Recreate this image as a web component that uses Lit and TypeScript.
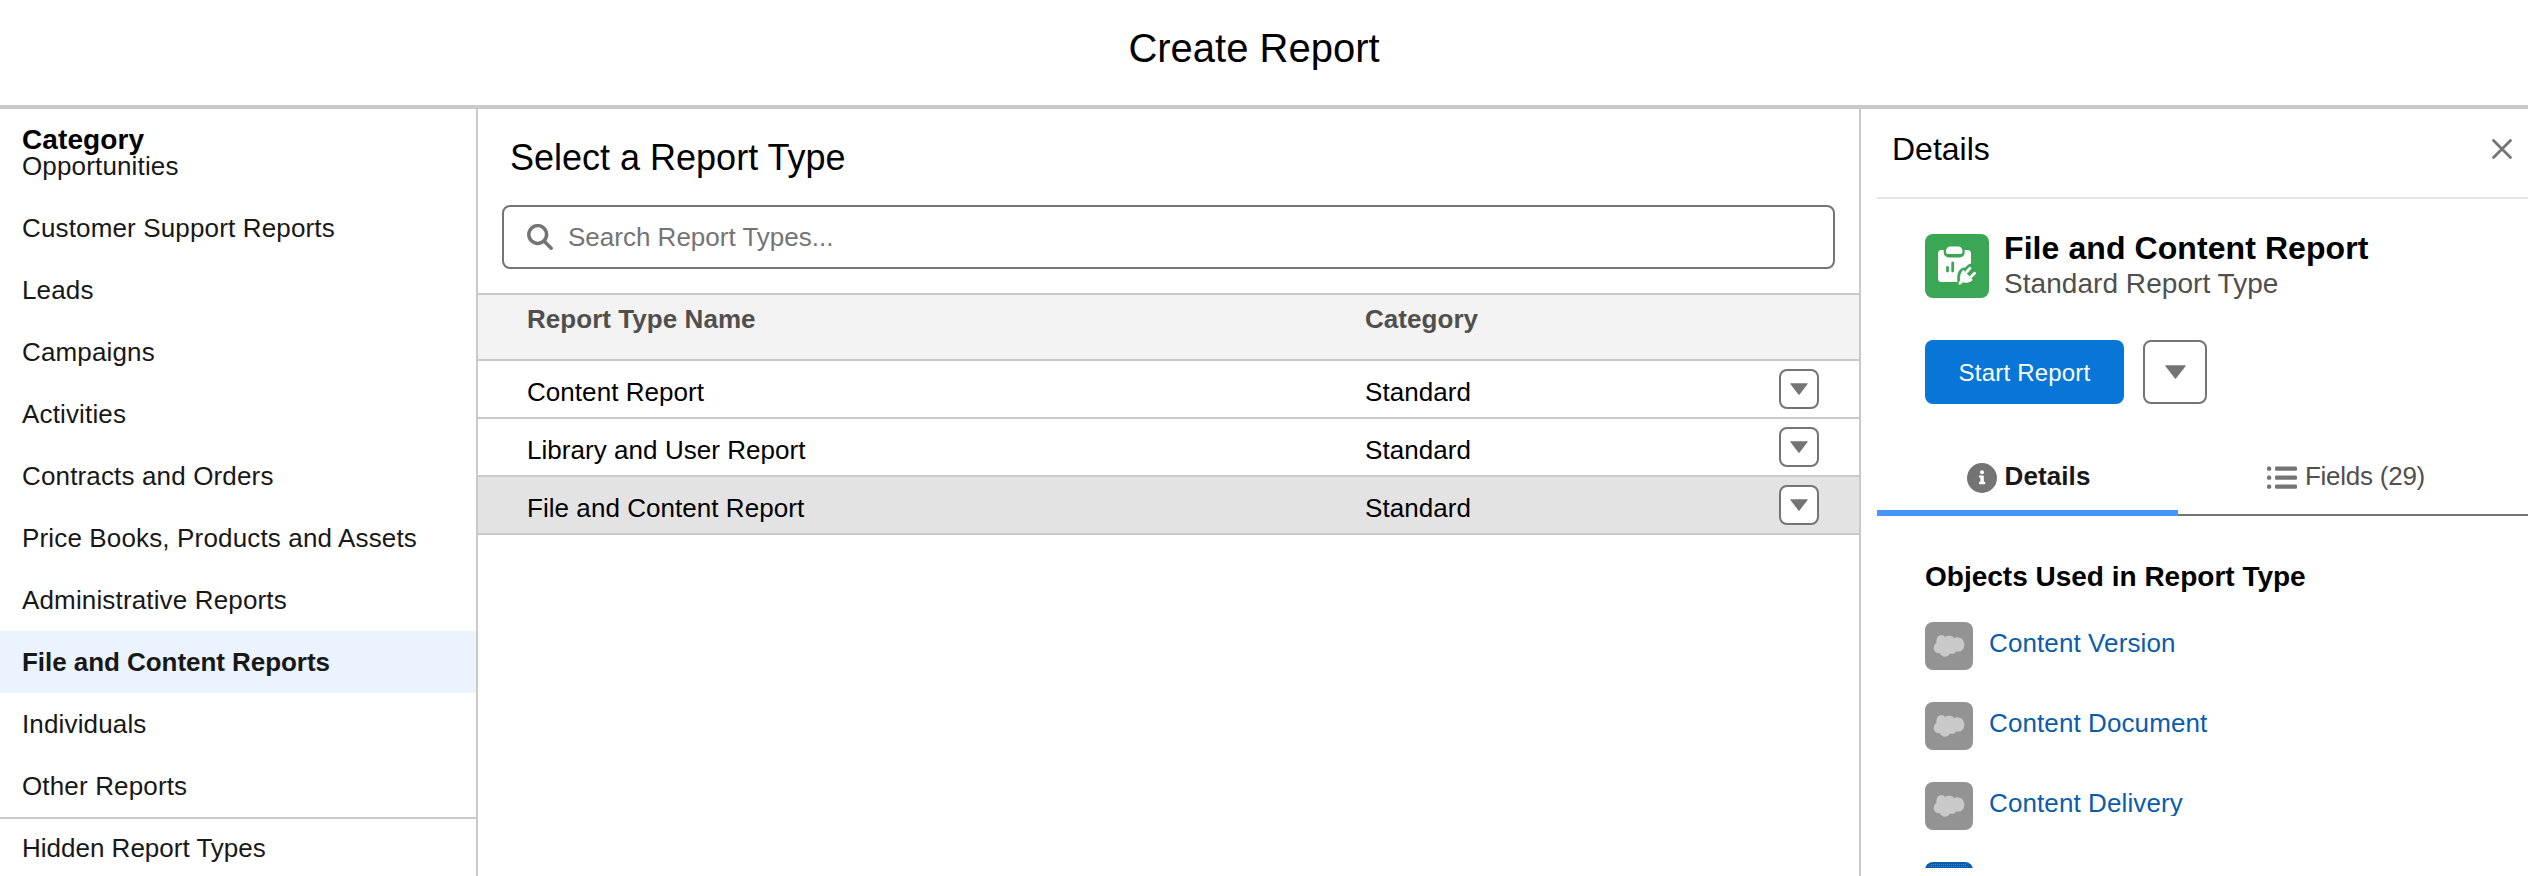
import { LitElement, html, css, svg } from "lit";
import { customElement, property } from "lit/decorators.js";
import { classMap } from "lit/directives/class-map.js";

const categories = [
  "Opportunities",
  "Customer Support Reports",
  "Leads",
  "Campaigns",
  "Activities",
  "Contracts and Orders",
  "Price Books, Products and Assets",
  "Administrative Reports",
  "File and Content Reports",
  "Individuals",
  "Other Reports",
  "Hidden Report Types",
];

const reportTypes = ["Content Report", "Library and User Report", "File and Content Report"];
const objects = ["Content Version", "Content Document", "Content Delivery"];
const selectedCategory = "File and Content Reports";
const selectedReport = "File and Content Report";

@customElement("menu-button")
class MenuButton extends LitElement {
  @property({ type: Boolean, reflect: true }) large = false;

  static styles = css`
    :host { display: block; width: 40px; height: 40px; flex: none; }
    :host([large]) { width: 64px; height: 64px; }
    .btn {
      display: flex; align-items: center; justify-content: center;
      box-sizing: border-box; width: 100%; height: 100%; padding: 0;
      background: #fff; border: 2px solid #747474; border-radius: 8px;
    }
    svg { display: block; width: 18px; height: 12px; }
    :host([large]) svg { width: 21px; height: 14px; }
  `;

  render() {
    return html`<button class="btn" aria-label="Show menu">
      <svg viewBox="0 0 18 12"><path d="M.8 .2h16.400c.5 0 .7.500.4.900L9.600 11.400c-.3.400-.9.400-1.200 0L.4 1.100C.1.700.3.200.8.200z" fill="#747474"/></svg>
    </button>`;
  }
}

@customElement("category-nav")
class CategoryNav extends LitElement {
  static styles = css`
    :host { display: block; box-sizing: border-box; width: 478px; flex: none; border-right: 2px solid #c9c9c9; overflow: hidden; }
    .title { height: 26px; padding-left: 22px; font-size: 28px; font-weight: 700; line-height: 61px; letter-spacing: .1px; color: #000; margin: 0; }
    .item { box-sizing: border-box; height: 62px; padding-left: 22px; line-height: 62px; font-size: 26px; letter-spacing: .15px; color: #181818; white-space: nowrap; }
    .selected { background: #ebf3fe; font-weight: 700; letter-spacing: -.05px; }
    .hidden-types { border-top: 2px solid #c9c9c9; line-height: 58px; letter-spacing: 0; }
  `;

  render() {
    return html`<h2 class="title">Category</h2>
      ${categories.map((c, i) => html`<div class=${classMap({
        item: true,
        selected: c === selectedCategory,
        "hidden-types": i === categories.length - 1,
      })}>${c}</div>`)}`;
  }
}

@customElement("report-list")
class ReportList extends LitElement {
  static styles = css`
    :host { display: block; flex: 1; min-width: 0; }
    .title { margin: 0; padding: 25px 0 0 32px; font-size: 36px; font-weight: 400; line-height: 47px; color: #000; }
    .search {
      display: flex; align-items: center; box-sizing: border-box; height: 64px; margin: 24px 24px 24px;
      padding-left: 23px; gap: 15px; border: 2px solid #747474; border-radius: 8px;
      font-size: 26px; color: #747474;
    }
    .search svg { width: 26px; height: 26px; }
    .row {
      display: grid; grid-template-columns: 886px 415px 40px; box-sizing: border-box; height: 58px;
      border-bottom: 2px solid #c9c9c9; font-size: 26px; line-height: 62px; letter-spacing: .05px; color: #000;
    }
    .row span { padding-left: 1px; }
    .row span:first-child { padding-left: 49px; }
    .row menu-button { margin-top: 8px; }
    .head { height: 68px; border-top: 2px solid #c9c9c9; background: #f3f3f3; color: #514f4d; font-weight: 700; line-height: 48px; }
    .selected { background: #e3e3e3; }
  `;

  render() {
    return html`<h2 class="title">Select a Report Type</h2>
      <div class="search">
        <svg viewBox="0 0 26 26" fill="none" stroke="#747474"><circle cx="10.7" cy="10.5" r="8.900" stroke-width="3.500"/><path d="M17 17l7.200 7.200" stroke-width="3.500" stroke-linecap="round"/></svg>
        <span>Search Report Types...</span>
      </div>
      <div class="row head"><span>Report Type Name</span><span>Category</span></div>
      ${reportTypes.map((r) => html`<div class=${classMap({ row: true, selected: r === selectedReport })}>
        <span>${r}</span><span>Standard</span><menu-button></menu-button>
      </div>`)}`;
  }
}

const cloud = svg`<path d="M20 15.2C21.2 14 22.8 13.6 24.5 13.8C26.5 13.8 28.2 14.8 29 16C30.2 15.4 31.4 15.3 33 15.4C36.8 15.4 39.3 18.8 39.3 22.7C39.3 26.8 36.5 29.8 33 29.6C32.2 29.6 31.6 29.6 31 29.4C30.2 31 28.6 32 26.7 31.8C26 31.8 25.4 31.7 24.8 31.4C23.9 33.5 22 34.7 19.9 34.7C17.7 34.7 15.8 33.3 15 31.3C12 31.8 8.6 29.5 8.6 25.9C8.6 23.8 9.7 22 11.5 20.9C11 17 12.6 13.2 16.2 13.1C17.8 13.1 19.1 13.9 20 15.2Z" fill="#c9c9c9"/>`;

@customElement("report-details")
class ReportDetails extends LitElement {
  static styles = css`
    :host { display: flex; flex-direction: column; box-sizing: border-box; width: 669px; flex: none; padding-left: 16px; border-left: 2px solid #c9c9c9; overflow: hidden; }
    .top { display: flex; justify-content: space-between; box-sizing: border-box; height: 90px; flex: none; padding: 20px 15px 0 15px; border-bottom: 2px solid #e5e5e5; }
    .top h2 { margin: 0; font-size: 32px; font-weight: 400; line-height: 40px; color: #000; }
    .top svg { width: 22px; height: 22px; margin-top: 9px; }
    .summary { display: flex; height: 64px; flex: none; margin: 35px 0 0 48px; gap: 15px; }
    .report-icon { width: 64px; height: 64px; flex: none; }
    .name { margin: -6px 0 0; font-size: 32px; line-height: 40px; letter-spacing: .08px; color: #000; }
    .kind { margin: 0; font-size: 28px; line-height: 31px; letter-spacing: .05px; color: #514f4d; }
    .actions { display: flex; gap: 19px; flex: none; margin: 42px 0 0 48px; }
    .start { width: 199px; height: 64px; padding: 2px 0 0; border: 0; border-radius: 8px; background: #0876d6; color: #fff; font: inherit; font-size: 24px; letter-spacing: .2px; }
    .tabs { display: flex; flex: none; height: 82px; margin-top: 30px; font-size: 26px; line-height: 30px; color: #514f4d; }
    .tab { display: flex; align-items: flex-start; justify-content: center; gap: 8px; box-sizing: border-box; height: 82px; padding-top: 29px; border-bottom: 2px solid #747474; }
    .tab svg { width: 30px; height: 30px; flex: none; }
    .tab span { margin-top: -2px; }
    .active { width: 301px; padding-left: 2px; border-bottom: 6px solid #4596f8; font-weight: 700; color: #181818; letter-spacing: .1px; }
    .fields { width: 336px; letter-spacing: -.25px; }
    .rest { flex: 1; border-bottom: 2px solid #747474; }
    .heading { margin: 43px 0 0 48px; flex: none; font-size: 28px; line-height: 36px; color: #000; }
    .objects { display: flex; flex-direction: column; gap: 32px; height: 246px; flex: none; overflow: hidden; margin: 27px 0 0 48px; }
    .object { display: flex; gap: 16px; flex: none; height: 48px; }
    .object svg { width: 48px; height: 48px; flex: none; }
    .link { height: 26px; margin-top: 8px; line-height: 26px; font-size: 26px; letter-spacing: .1px; color: #0b5cab; text-decoration: none; }
    .clipped { overflow: hidden; }
  `;

  render() {
    return html`
      <div class="top"><h2>Details</h2>
        <svg viewBox="0 0 22 22"><path d="M2.500 2.500l17 17M19.500 2.500l-17 17" stroke="#747474" stroke-width="2.800" stroke-linecap="round"/></svg>
      </div>
      <div class="summary">
        <svg class="report-icon" viewBox="0 0 64 64">
          <rect width="64" height="64" rx="8" fill="#3ba755"/>
          <path d="M16.500 16H42.500a3.500 3.500 0 0 1 3.500 3.500V29.500C43.500 30 42 31.500 40.500 33.500C37 33.500 34 35.500 33 39C32 42 32 45 32.500 48H16.500a3.500 3.500 0 0 1-3.500-3.500V19.500a3.500 3.500 0 0 1 3.500-3.500z" fill="#fff"/>
          <path d="M18.700 15.500v3a5 5 0 0 0 5 5h11a5 5 0 0 0 5-5v-3z" fill="#3ba755"/>
          <path d="M25.500 12.500h7.500c2.500 0 4.500 2 4.500 4.500V18c0 1.200-.8 2-2 2H23c-1.200 0-2-.8-2-2v-1c0-2.500 2-4.500 4.500-4.500z" fill="#fff"/>
          <path d="M22.500 33.300v3.700M27.700 29v8" stroke="#3ba755" stroke-width="2.800" stroke-linecap="round"/>
          <path d="M38.800 36.300L47.300 45.300C47.700 45.900 47.500 46.500 46.800 46.800C43.500 49 40.500 49.300 38 48.300L35.800 50.300C34.800 51.200 33.300 50.300 33.600 49L35 46.200C34.500 42.500 35.500 39.500 37.500 36.500C37.900 36 38.400 35.900 38.800 36.300z" fill="#fff"/>
          <path d="M41.700 37.700l3.300-3.400M46.300 42.500l3.300-3.200" stroke="#fff" stroke-width="2.800" stroke-linecap="round"/>
        </svg>
        <div><h3 class="name">File and Content Report</h3><p class="kind">Standard Report Type</p></div>
      </div>
      <div class="actions"><button class="start">Start Report</button><menu-button large></menu-button></div>
      <div class="tabs">
        <div class="tab active">
          <svg viewBox="0 0 30 30"><circle cx="15" cy="15" r="15" fill="#747474"/><circle cx="15" cy="9.300" r="2" fill="#fff"/><path d="M12.700 12.500h3.500c.4 0 .6.200.6.600v5.700h.8c.4 0 .6.200.6.600v1.200c0 .4-.2.600-.6.600h-5c-.4 0-.6-.2-.6-.6v-1.200c0-.4.2-.6.600-.6h.8v-4.200h-.8c-.4 0-.6-.2-.6-.6v-1c0-.4.300-.6.600-.6z" fill="#fff"/></svg>
          <span>Details</span>
        </div>
        <div class="tab fields">
          <svg viewBox="0 0 30 30" fill="#747474"><rect y="3.500" width="4.200" height="4.200" rx="1.500"/><rect y="12.500" width="4.200" height="4.200" rx="1.500"/><rect y="21.500" width="4.200" height="4.200" rx="1.500"/><rect x="8" y="3.500" width="22" height="4.200" rx="1.300"/><rect x="8" y="12.500" width="22" height="4.200" rx="1.300"/><rect x="8" y="21.500" width="22" height="4.200" rx="1.300"/></svg>
          <span>Fields (29)</span>
        </div>
        <div class="rest"></div>
      </div>
      <h3 class="heading">Objects Used in Report Type</h3>
      <div class="objects">
        ${objects.map((o, i) => html`<div class="object">
          <svg viewBox="0 0 48 48"><rect width="48" height="48" rx="8" fill="#939393"/>${cloud}</svg>
          <a class=${classMap({ link: true, clipped: i === objects.length - 1 })}>${o}</a>
        </div>`)}
        <div class="object"><svg viewBox="0 0 48 48">
          <defs><pattern id="dots" width="2" height="2" patternUnits="userSpaceOnUse"><rect width="1" height="1" fill="#4d86c0"/></pattern></defs>
          <rect width="48" height="48" rx="8" fill="#0b5cab"/><rect x="6" y="2" width="36" height="1" fill="url(#dots)"/><rect x="4" y="4" width="40" height="1" fill="url(#dots)"/>
        </svg></div>
      </div>`;
  }
}

@customElement("app-root")
class AppRoot extends LitElement {
  static styles = css`
    :host { display: flex; flex-direction: column; height: 876px; overflow: hidden; background: #fff; font-family: "Liberation Sans", Arial, sans-serif; }
    .header { box-sizing: border-box; height: 109px; flex: none; padding-right: 20px; border-bottom: 4px solid #c9c9c9; }
    .header h1 { margin: 0; text-align: center; font-size: 40px; font-weight: 400; line-height: 96px; color: #000; }
    .body { display: flex; flex: 1; min-height: 0; }
  `;

  render() {
    return html`<header class="header"><h1>Create Report</h1></header>
      <main class="body"><category-nav></category-nav><report-list></report-list><report-details></report-details></main>`;
  }
}
